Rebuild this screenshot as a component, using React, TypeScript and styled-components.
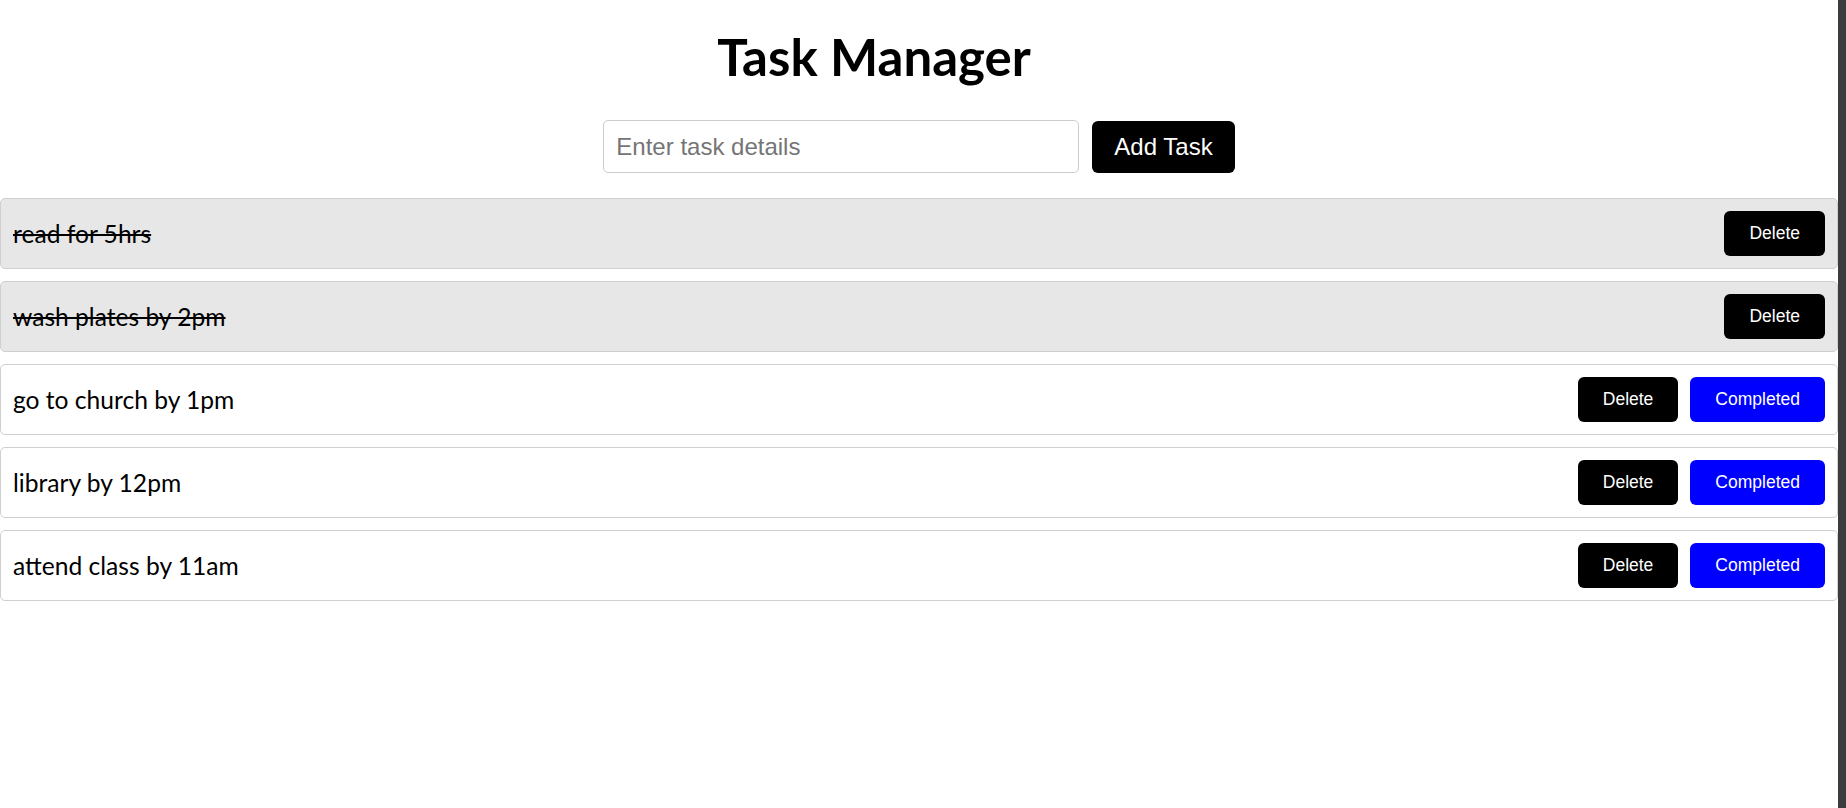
import React, { useState } from "react";
import styled, { createGlobalStyle } from "styled-components";

const GlobalStyle = createGlobalStyle`
  html, body { margin: 0; padding: 0; background: #ffffff; }
  * { box-sizing: border-box; }
`;

const Page = styled.div`
  min-height: 100vh;
  border-right: 8px solid #3c3c3c;
  font-family: Lato, "Noto Sans", sans-serif;
  color: #000;
`;

const Header = styled.header`
  display: flex;
  flex-direction: column;
  align-items: center;
`;

const Title = styled.h1`
  margin: 26px 90px 0 0;
  font-family: Lato, "Noto Sans", sans-serif;
  font-weight: 700;
  font-size: 51px;
  line-height: 62px;
`;

const Form = styled.form`
  display: flex;
  justify-content: center;
  align-items: center;
  gap: 13px;
  margin-top: 32px;
`;

const Input = styled.input`
  width: 476px;
  height: 53px;
  padding: 0 12px;
  border: 1px solid #cccccc;
  border-radius: 5px;
  font-family: "Liberation Sans", Arial, sans-serif;
  font-size: 24px;
  color: #000;
  outline: none;
  &::placeholder { color: #757575; }
`;

const AddButton = styled.button`
  height: 52px;
  padding: 0 22px;
  border: none;
  border-radius: 6px;
  background: #000;
  color: #fff;
  font-family: "Liberation Sans", Arial, sans-serif;
  font-size: 24px;
  cursor: pointer;
`;

const List = styled.ul`
  list-style: none;
  margin: 25px 0 0;
  padding: 0;
  display: flex;
  flex-direction: column;
  gap: 12px;
`;

const Row = styled.li<{ $done: boolean }>`
  display: flex;
  align-items: center;
  justify-content: space-between;
  height: 71px;
  padding: 0 12px;
  border: 1px solid #cfcfcf;
  border-radius: 5px;
  background: ${(p) => (p.$done ? "#e7e7e7" : "#ffffff")};
`;

const TaskText = styled.span<{ $done: boolean }>`
  font-family: Lato, "Noto Sans", sans-serif;
  font-size: 24.6px;
  text-decoration: ${(p) => (p.$done ? "line-through" : "none")};
  text-decoration-thickness: 2px;
`;

const Actions = styled.div`
  display: flex;
  gap: 12px;
`;

const ActionButton = styled.button<{ $variant: "delete" | "complete" }>`
  height: 45px;
  padding: 0 25px;
  border: none;
  border-radius: 6px;
  background: ${(p) => (p.$variant === "delete" ? "#000000" : "#0000ff")};
  color: #fff;
  font-family: "Liberation Sans", Arial, sans-serif;
  font-size: 17.5px;
  cursor: pointer;
`;

type Task = { id: number; text: string; done: boolean };

const initial: Task[] = [
  { id: 1, text: "read for 5hrs", done: true },
  { id: 2, text: "wash plates by 2pm", done: true },
  { id: 3, text: "go to church by 1pm", done: false },
  { id: 4, text: "library by 12pm", done: false },
  { id: 5, text: "attend class by 11am", done: false },
];

export default function App() {
  const [tasks, setTasks] = useState<Task[]>(initial);
  const [value, setValue] = useState("");

  const add = (e: React.FormEvent) => {
    e.preventDefault();
    if (!value.trim()) return;
    setTasks([{ id: Date.now(), text: value.trim(), done: false }, ...tasks]);
    setValue("");
  };

  return (
    <Page>
      <GlobalStyle />
      <Header>
        <Title>Task Manager</Title>
      </Header>
      <Form onSubmit={add}>
        <Input
          placeholder="Enter task details"
          value={value}
          onChange={(e) => setValue(e.target.value)}
        />
        <AddButton type="submit">Add Task</AddButton>
      </Form>
      <List>
        {tasks.map((t) => (
          <Row key={t.id} $done={t.done}>
            <TaskText $done={t.done}>{t.text}</TaskText>
            <Actions>
              <ActionButton
                $variant="delete"
                onClick={() => setTasks(tasks.filter((x) => x.id !== t.id))}
              >
                Delete
              </ActionButton>
              {!t.done && (
                <ActionButton
                  $variant="complete"
                  onClick={() =>
                    setTasks(tasks.map((x) => (x.id === t.id ? { ...x, done: true } : x)))
                  }
                >
                  Completed
                </ActionButton>
              )}
            </Actions>
          </Row>
        ))}
      </List>
    </Page>
  );
}
